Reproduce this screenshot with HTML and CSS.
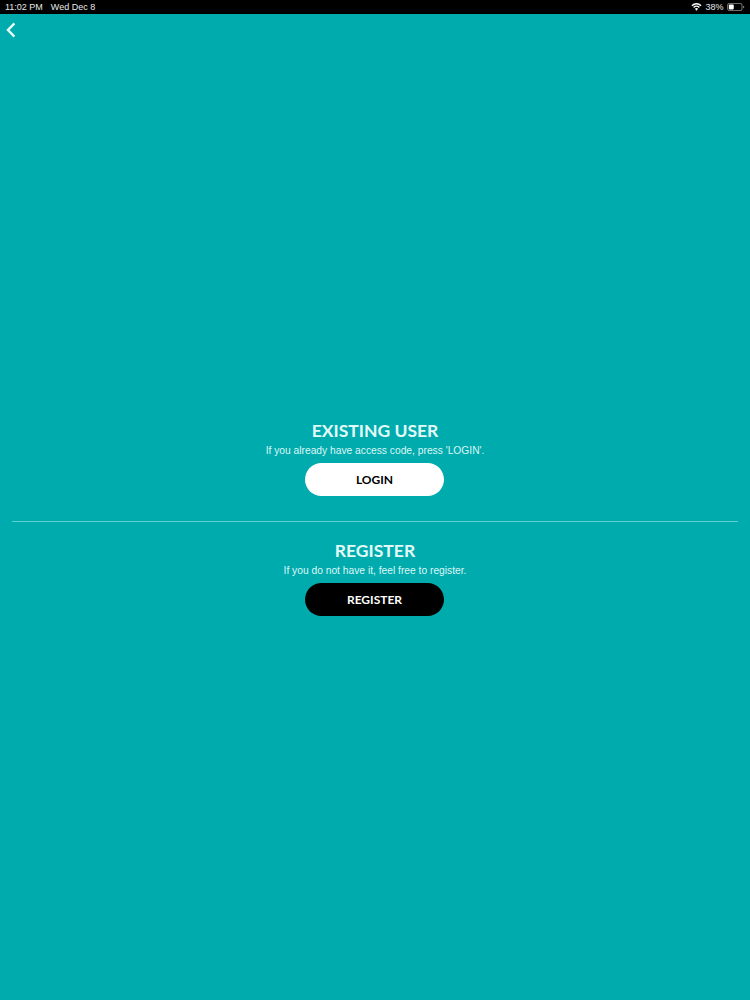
FILE: index.html
```html
<!DOCTYPE html>
<html lang="en">
<head>
<meta charset="utf-8">
<title>Login</title>
<link rel="stylesheet" href="styles.css">
</head>
<body>
<div class="app">
  <header class="status">
    <div class="status-left"><span>11:02 PM</span><span>Wed Dec 8</span></div>
    <div class="status-right">
      <svg class="wifi" viewBox="0 0 16 12" width="11" height="8"><path fill="#fff" d="M8 11.5 5.6 8.8a3.4 3.4 0 0 1 4.8 0zM4.4 7.6 3 6a7 7 0 0 1 10 0l-1.4 1.6a5 5 0 0 0-7.2 0zM1.9 4.9.4 3.3a10.8 10.8 0 0 1 15.2 0l-1.5 1.6a8.6 8.6 0 0 0-12.2 0z"/></svg>
      <span>38%</span>
      <svg class="battery" viewBox="0 0 22 10" width="18" height="8"><rect x=".5" y=".5" width="18" height="9" rx="2.2" fill="none" stroke="#fff" stroke-opacity=".6"/><rect x="2" y="2" width="6.2" height="6" rx="1" fill="#fff"/><path d="M20 3.4c.9.2 1.4.8 1.4 1.6s-.5 1.4-1.4 1.6z" fill="#fff" fill-opacity=".6"/></svg>
    </div>
  </header>
  <nav class="nav">
    <svg class="back" viewBox="0 0 10 16" width="10" height="16"><path d="M8.4 1.4 2 8l6.4 6.6" fill="none" stroke="#e6fbfa" stroke-width="2.4"/></svg>
  </nav>
  <main class="content">
    <section class="block">
      <h2 class="title">EXISTING USER</h2>
      <p class="hint">If you already have access code, press 'LOGIN'.</p>
      <button class="btn btn-light">LOGIN</button>
    </section>
    <hr class="divider">
    <section class="block">
      <h2 class="title">REGISTER</h2>
      <p class="hint">If you do not have it, feel free to register.</p>
      <button class="btn btn-dark">REGISTER</button>
    </section>
  </main>
</div>
</body>
</html>
```
FILE: styles.css
```css
* { box-sizing: border-box; }
html, body { margin: 0; padding: 0; }
body { background: #00abae; font-family: "Liberation Sans", Arial, sans-serif; }
.app { width: 750px; height: 1000px; display: flex; flex-direction: column; overflow: hidden; }
.status {
  height: 14px; flex: none; background: #000; color: #e8e8e8;
  display: flex; justify-content: space-between; align-items: center;
  font-size: 9px; padding: 0 5px;
}
.status-left { display: flex; gap: 8px; }
.status-right { display: flex; align-items: center; gap: 3.5px; }
.wifi, .battery { display: block; }
.nav { height: 32px; flex: none; padding: 8px 0 0 6px; }
.back { display: block; }
.content { padding-top: 373px; display: flex; flex-direction: column; align-items: center; }
.block { display: flex; flex-direction: column; align-items: center; align-self: stretch; }
.title {
  margin: 0; font: 700 17.5px/24px Lato, sans-serif; color: #e3fbf8; height: 24px;
}
.hint { margin: 1px 0 0; font-size: 10.25px; line-height: 14px; color: #dff6f5; height: 14px; }
.btn {
  margin: 5px 1px 0 0; width: 139px; height: 33px; border: 0; border-radius: 17px;
  font: 700 12px/33px Lato, sans-serif; padding: 0;
}
.btn-light { background: #fff; color: #000; }
.btn-dark { background: #000; color: #fff; }
.divider {
  width: 726px; height: 1px; border: 0; margin: 25px 0 17px; background: #5fd0d0;
}
```
